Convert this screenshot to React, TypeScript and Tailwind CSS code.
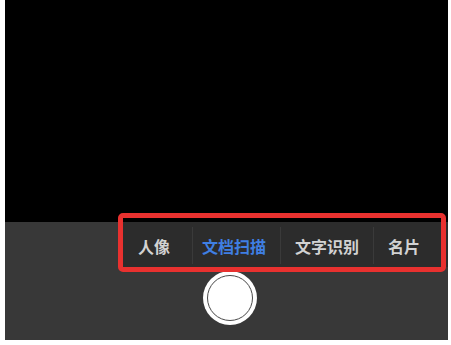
const TABS = [
  { label: '人像', width: 'w-[74px]', pad: 'pl-[20px]', active: false },
  { label: '文档扫描', width: 'w-[88px]', pad: 'pl-[9px]', active: true },
  { label: '文字识别', width: 'w-[93px]', pad: 'pl-[14px]', active: false },
  { label: '名片', width: 'flex-1', pad: 'pl-[14px]', active: false },
]

export default function App() {
  return (
    <div className="w-[451px] h-[345px] bg-white pl-[5px] pr-[3px] pb-[5px] flex flex-col">
      {/* viewfinder */}
      <div className="h-[222px] bg-black" />

      {/* controls */}
      <div className="relative flex-1 bg-[#383838]">
        <div
          className="ml-[113px] h-[45px] pt-[2px] flex items-center bg-[#2c2c2c] text-[16px] font-bold text-[#d2d2d2]"
          style={{ fontFamily: '"Noto Sans CJK SC", "Noto Sans", sans-serif' }}>
          {TABS.map((tab, idx) => (
            <div
              key={idx}
              className={`${tab.width} ${tab.pad} h-[37px] flex items-center ${
                idx > 0 ? 'border-l border-[#3a3a3a]' : ''
              } ${tab.active ? 'text-[#3f7fe3]' : ''}`}>
              {tab.label}
            </div>
          ))}
        </div>

        <div className="mt-[4px] ml-[198px] w-[54px] h-[54px] rounded-full bg-white p-[4px]">
          <div className="w-full h-full rounded-full border-[1.5px] border-[#4a4a4a] bg-white" />
        </div>

        {/* annotation box */}
        <div className="absolute left-[113px] top-[-9px] w-[328px] h-[59px] border-[5px] border-[#e8312f] rounded-[5px]" />
      </div>
    </div>
  )
}
